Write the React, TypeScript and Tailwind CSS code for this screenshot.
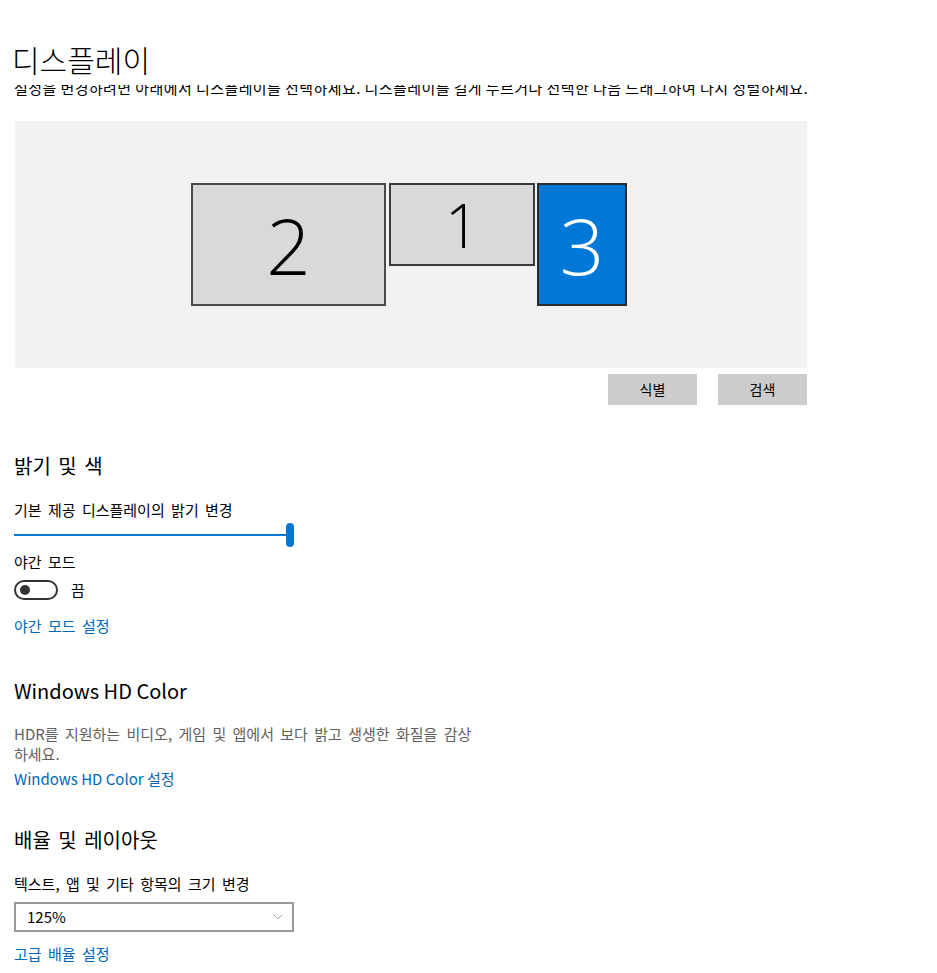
import { ChevronDown } from "lucide-react";

const kr = "font-['Noto_Sans_CJK_KR',_'Noto_Sans',_sans-serif]";

function Monitor({ n, className, textClass }: { n: string; className: string; textClass: string }) {
  return (
    <div className={`flex items-center justify-center border-2 ${className}`}>
      <span className={`font-['Open_Sans',_sans-serif] font-light leading-none ${textClass}`}>{n}</span>
    </div>
  );
}

export default function App() {
  return (
    <div className={`w-[937px] h-[973px] bg-white pl-[14px] text-black overflow-hidden [word-spacing:3px] ${kr}`}>
      {/* header */}
      <h1 className="-ml-[2px] pt-[39px] text-[30px] leading-[40px] font-light">디스플레이</h1>
      <div className="mt-[6px] h-[11px] w-[800px] overflow-hidden">
        <p className="-mt-[7px] text-[15px] leading-[20px] tracking-[0.42px] [word-spacing:0px] whitespace-nowrap">
          설정을 변경하려면 아래에서 디스플레이를 선택하세요. 디스플레이를 길게 누르거나 선택한 다음 드래그하여 다시 정렬하세요.
        </p>
      </div>

      {/* display arrangement */}
      <div className="ml-[1px] mt-[25px] w-[792px] h-[247px] bg-[#f2f2f2] flex items-start pl-[176px] pt-[62px]">
        <Monitor n="2" className="w-[195px] h-[123px] bg-[#d9d9d9] border-[#4a4a4a]" textClass="text-[78px] text-black" />
        <Monitor n="1" className="ml-[3px] w-[146px] h-[83px] bg-[#d9d9d9] border-[#3a3a3a]" textClass="text-[60px] text-black" />
        <Monitor n="3" className="ml-[2px] w-[90px] h-[123px] bg-[#0078d7] border-[#2b2b2b]" textClass="text-[78px] text-white" />
      </div>
      <div className="ml-[1px] mt-[6px] w-[792px] flex justify-end gap-[21px]">
        <button className="w-[89px] h-[31px] bg-[#cccccc] text-[14px]">식별</button>
        <button className="w-[89px] h-[31px] bg-[#cccccc] text-[14px]">검색</button>
      </div>

      {/* brightness */}
      <h2 className="mt-[47px] text-[20px] leading-[28px]">밝기 및 색</h2>
      <p className="mt-[20px] text-[15px] leading-[20px]">기본 제공 디스플레이의 밝기 변경</p>
      <div className="mt-[3px] h-[24px] w-[280px] flex items-center">
        <div className="h-[2px] w-[272px] bg-[#0078d7]" />
        <div className="h-[24px] w-[8px] rounded-full bg-[#0078d7]" />
      </div>
      <p className="mt-[5px] text-[15px] leading-[20px]">야간 모드</p>
      <div className="mt-[8px] flex items-center gap-[13px]">
        <div className="w-[44px] h-[20px] rounded-full border-2 border-[#333] flex items-center pl-[4px]">
          <div className="w-[10px] h-[10px] rounded-full bg-[#333]" />
        </div>
        <span className="text-[15px] leading-[20px]">끔</span>
      </div>
      <p className="mt-[16px] text-[15px] leading-[20px] text-[#0067b8]">야간 모드 설정</p>

      {/* HD color */}
      <h2 className="mt-[41px] text-[20px] leading-[28px] [word-spacing:0px]">Windows HD Color</h2>
      <p className="mt-[19px] w-[464px] text-[15px] leading-[20px] text-[#5f5f5f]">
        HDR를 지원하는 비디오, 게임 및 앱에서 보다 밝고 생생한 화질을 감상하세요.
      </p>
      <p className="mt-[5px] text-[15px] leading-[20px] text-[#0067b8] [word-spacing:0px]">Windows HD Color 설정</p>

      {/* scale */}
      <h2 className="mt-[37px] text-[20px] leading-[28px]">배율 및 레이아웃</h2>
      <p className="mt-[20px] text-[15px] leading-[20px]">텍스트, 앱 및 기타 항목의 크기 변경</p>
      <div className="mt-[8px] w-[280px] h-[30px] border-2 border-[#999] flex items-center justify-between pl-[11px] pr-[6px]">
        <span className="text-[15px] leading-[20px]">125%</span>
        <ChevronDown className="w-[16px] h-[16px] text-[#777]" strokeWidth={1} />
      </div>
      <p className="mt-[12px] text-[15px] leading-[20px] text-[#0067b8]">고급 배율 설정</p>
    </div>
  );
}
